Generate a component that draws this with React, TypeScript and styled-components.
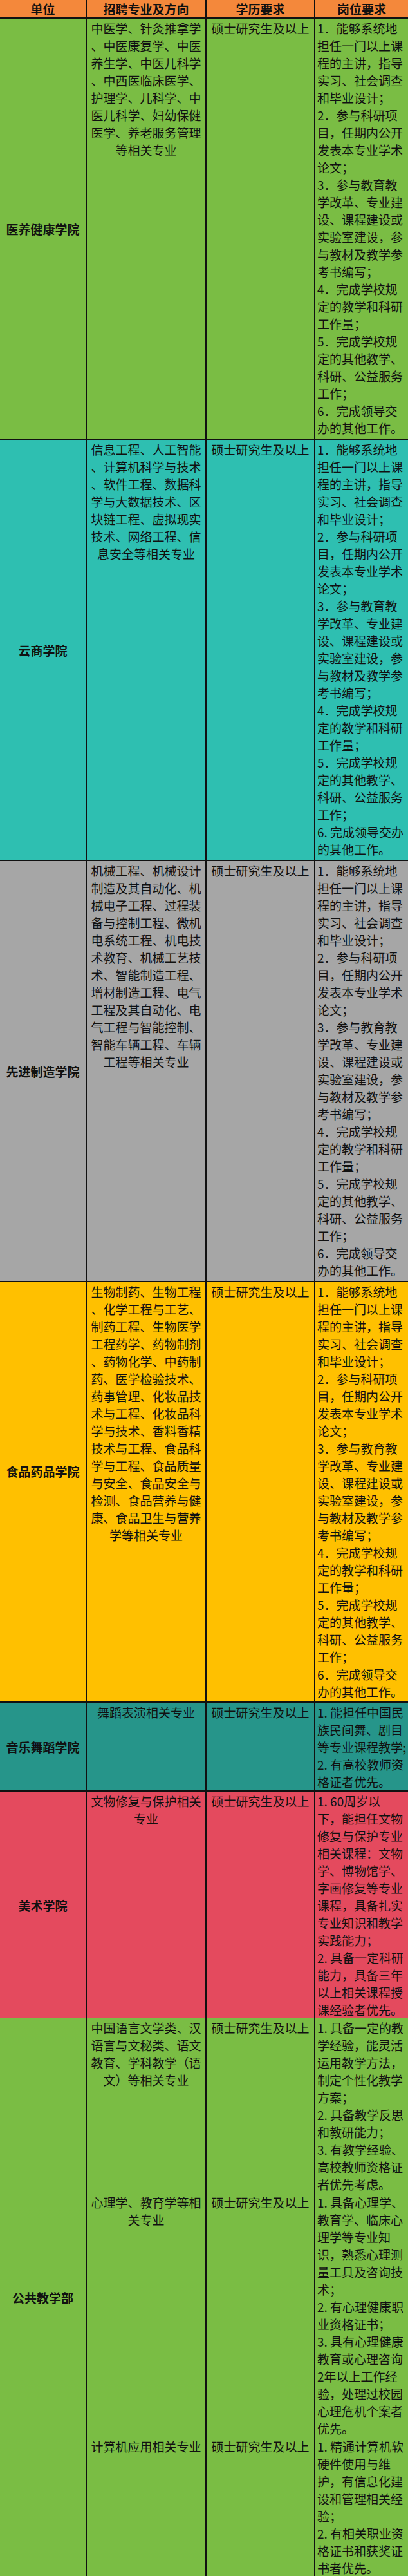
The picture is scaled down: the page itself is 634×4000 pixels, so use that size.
import React from 'react'
import styled, { createGlobalStyle } from 'styled-components'

const GlobalStyle = createGlobalStyle`
    html,
    body {
        margin: 0;
        padding: 0;
        background: #ffffff;
    }

    body {
        font-family: 'Noto Sans CJK SC', 'Noto Sans', sans-serif;
        color: #111111;
    }
`

const COLS = '133px 186px 169px 146px'
const RULE = '2px solid #111111'

interface Position {
    major: string[]
    duties: string[]
}

interface Unit {
    name: string
    bg: string
    rows: Position[]
    tail: number
    lift?: number
    divider?: boolean
}

const standardDuties = (last: string[]) => [
    '1．能够系统地',
    '担任一门以上课',
    '程的主讲，指导',
    '实习、社会调查',
    '和毕业设计；',
    '2．参与科研项',
    '目，任期内公开',
    '发表本专业学术',
    '论文；',
    '3．参与教育教',
    '学改革、专业建',
    '设、课程建设或',
    '实验室建设，参',
    '与教材及教学参',
    '考书编写；',
    '4．完成学校规',
    '定的教学和科研',
    '工作量；',
    '5．完成学校规',
    '定的其他教学、',
    '科研、公益服务',
    '工作；',
    ...last,
]

const units: Unit[] = [
    {
        name: '医养健康学院',
        bg: '#7abd44',
        tail: 3,
        divider: true,
        rows: [
            {
                major: [
                    '中医学、针灸推拿学',
                    '、中医康复学、中医',
                    '养生学、中医儿科学',
                    '、中西医临床医学、',
                    '护理学、儿科学、中',
                    '医儿科学、妇幼保健',
                    '医学、养老服务管理',
                    '等相关专业',
                ],
                duties: standardDuties(['6．完成领导交', '办的其他工作。']),
            },
        ],
    },
    {
        name: '云商学院',
        bg: '#2ebfb1',
        tail: 3,
        divider: true,
        rows: [
            {
                major: [
                    '信息工程、人工智能',
                    '、计算机科学与技术',
                    '、软件工程、数据科',
                    '学与大数据技术、区',
                    '块链工程、虚拟现实',
                    '技术、网络工程、信',
                    '息安全等相关专业',
                ],
                duties: standardDuties(['6. 完成领导交办', '的其他工作。']),
            },
        ],
    },
    {
        name: '先进制造学院',
        bg: '#a6a6a6',
        tail: 3,
        divider: true,
        rows: [
            {
                major: [
                    '机械工程、机械设计',
                    '制造及其自动化、机',
                    '械电子工程、过程装',
                    '备与控制工程、微机',
                    '电系统工程、机电技',
                    '术教育、机械工艺技',
                    '术、智能制造工程、',
                    '增材制造工程、电气',
                    '工程及其自动化、电',
                    '气工程与智能控制、',
                    '智能车辆工程、车辆',
                    '工程等相关专业',
                ],
                duties: standardDuties(['6．完成领导交', '办的其他工作。']),
            },
        ],
    },
    {
        name: '食品药品学院',
        bg: '#ffc000',
        tail: 2,
        lift: 32,
        divider: true,
        rows: [
            {
                major: [
                    '生物制药、生物工程',
                    '、化学工程与工艺、',
                    '制药工程、生物医学',
                    '工程药学、药物制剂',
                    '、药物化学、中药制',
                    '药、医学检验技术、',
                    '药事管理、化妆品技',
                    '术与工程、化妆品科',
                    '学与技术、香料香精',
                    '技术与工程、食品科',
                    '学与工程、食品质量',
                    '与安全、食品安全与',
                    '检测、食品营养与健',
                    '康、食品卫生与营养',
                    '学等相关专业',
                ],
                duties: standardDuties(['6．完成领导交', '办的其他工作。']),
            },
        ],
    },
    {
        name: '音乐舞蹈学院',
        bg: '#26958a',
        tail: 0,
        divider: true,
        rows: [
            {
                major: ['舞蹈表演相关专业'],
                duties: ['1. 能担任中国民', '族民间舞、剧目', '等专业课程教学;', '2. 有高校教师资', '格证者优先。'],
            },
        ],
    },
    {
        name: '美术学院',
        bg: '#e44a5e',
        tail: 0,
        rows: [
            {
                major: ['文物修复与保护相关', '专业'],
                duties: [
                    '1. 60周岁以',
                    '下，能担任文物',
                    '修复与保护专业',
                    '相关课程：文物',
                    '学、博物馆学、',
                    '字画修复等专业',
                    '课程，具备扎实',
                    '专业知识和教学',
                    '实践能力；',
                    '2. 具备一定科研',
                    '能力，具备三年',
                    '以上相关课程授',
                    '课经验者优先。',
                ],
            },
        ],
    },
    {
        name: '公共教学部',
        bg: '#7abd44',
        tail: 0,
        divider: true,
        rows: [
            {
                major: ['中国语言文学类、汉', '语言与文秘类、语文', '教育、学科教学（语', '文）等相关专业'],
                duties: [
                    '1. 具备一定的教',
                    '学经验，能灵活',
                    '运用教学方法，',
                    '制定个性化教学',
                    '方案；',
                    '2. 具备教学反思',
                    '和教研能力；',
                    '3. 有教学经验、',
                    '高校教师资格证',
                    '者优先考虑。',
                ],
            },
            {
                major: ['心理学、教育学等相', '关专业'],
                duties: [
                    '1. 具备心理学、',
                    '教育学、临床心',
                    '理学等专业知',
                    '识，熟悉心理测',
                    '量工具及咨询技',
                    '术；',
                    '2. 有心理健康职',
                    '业资格证书；',
                    '3. 具有心理健康',
                    '教育或心理咨询',
                    '2年以上工作经',
                    '验，处理过校园',
                    '心理危机个案者',
                    '优先。',
                ],
            },
            {
                major: ['计算机应用相关专业'],
                duties: [
                    '1. 精通计算机软',
                    '硬件使用与维',
                    '护，有信息化建',
                    '设和管理相关经',
                    '验；',
                    '2. 有相关职业资',
                    '格证书和获奖证',
                    '书者优先。',
                ],
            },
        ],
    },
]

const Table = styled.div`
    width: 634px;
    display: flex;
    flex-direction: column;
`

const HeaderRow = styled.div`
    display: grid;
    grid-template-columns: ${COLS};
    height: 29px;
    box-sizing: border-box;
    background: #f4883b;
    border-bottom: ${RULE};
`

const HeadCell = styled.div<{ $first?: boolean }>`
    display: flex;
    align-items: center;
    justify-content: center;
    font-size: 19px;
    font-weight: 700;
    line-height: 27px;
    border-left: ${(p) => (p.$first ? 'none' : RULE)};
`

const Group = styled.div<{ $bg: string; $divider: boolean }>`
    display: grid;
    grid-template-columns: ${COLS};
    background: ${(p) => p.$bg};
    border-bottom: ${(p) => (p.$divider ? RULE : 'none')};
`

const UnitCell = styled.div<{ $span: number; $lift: number }>`
    grid-column: 1;
    grid-row: 1 / span ${(p) => p.$span};
    display: flex;
    align-items: center;
    justify-content: center;
    padding-bottom: ${(p) => p.$lift * 2}px;
    font-size: 19px;
    font-weight: 700;
    line-height: 27px;
    white-space: nowrap;
`

const Cell = styled.div<{ $col: number; $tail: number }>`
    grid-column: ${(p) => p.$col};
    box-sizing: border-box;
    padding-top: 1px;
    padding-bottom: ${(p) => p.$tail}px;
    border-left: ${RULE};
    font-size: 19px;
    line-height: 27px;
`

const MajorCell = styled(Cell)`
    text-align: center;
`

const DegreeCell = styled(Cell)`
    text-align: center;
`

const DutyCell = styled(Cell)`
    text-align: left;
    padding-left: 3px;
`

const Line = styled.div`
    white-space: nowrap;
`

const UnitGroup = ({ unit }: { unit: Unit }) => {
    const last = unit.rows.length - 1
    return (
        <Group $bg={unit.bg} $divider={!!unit.divider}>
            <UnitCell $span={unit.rows.length} $lift={unit.lift ?? 0}>
                {unit.name}
            </UnitCell>
            {unit.rows.map((row, i) => {
                const tail = i === last ? unit.tail : 0
                return (
                    <React.Fragment key={i}>
                        <MajorCell $col={2} $tail={tail}>
                            {row.major.map((line, j) => (
                                <Line key={j}>{line}</Line>
                            ))}
                        </MajorCell>
                        <DegreeCell $col={3} $tail={tail}>
                            <Line>硕士研究生及以上</Line>
                        </DegreeCell>
                        <DutyCell $col={4} $tail={tail}>
                            {row.duties.map((line, j) => (
                                <Line key={j}>{line}</Line>
                            ))}
                        </DutyCell>
                    </React.Fragment>
                )
            })}
        </Group>
    )
}

const App = () => {
    return (
        <>
            <GlobalStyle />
            <Table>
                <HeaderRow>
                    <HeadCell $first>单位</HeadCell>
                    <HeadCell>招聘专业及方向</HeadCell>
                    <HeadCell>学历要求</HeadCell>
                    <HeadCell>岗位要求</HeadCell>
                </HeaderRow>
                {units.map((unit) => (
                    <UnitGroup key={unit.name} unit={unit} />
                ))}
            </Table>
        </>
    )
}

export default App
